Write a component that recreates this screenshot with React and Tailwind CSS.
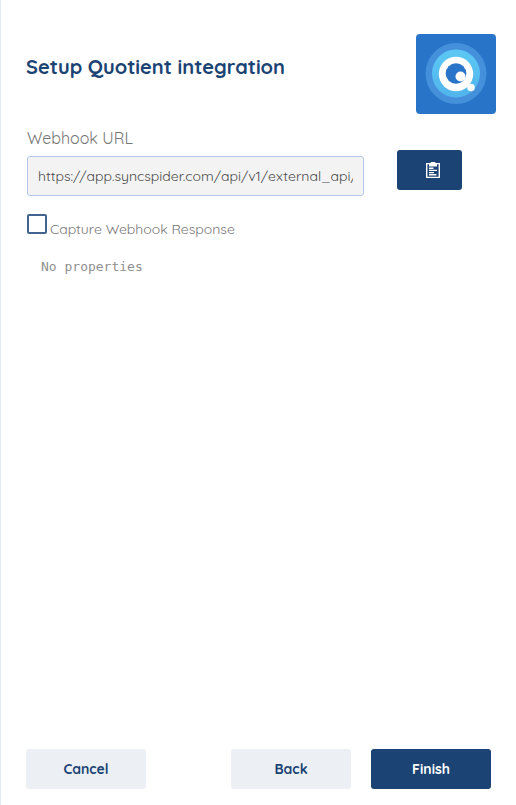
import { useState } from "react";

const WEBHOOK_URL = "https://app.syncspider.com/api/v1/external_api/";

function QuotientLogo() {
  return (
    <svg
      viewBox="0 0 80 80"
      role="img"
      aria-label="Quotient"
      className="size-20 shrink-0 rounded"
    >
      <defs>
        <linearGradient id="ring" x1="0" y1="0" x2="0" y2="1">
          <stop offset="0" stopColor="#5cc8f5" />
          <stop offset="1" stopColor="#51b4ec" />
        </linearGradient>
      </defs>
      <rect width="80" height="80" fill="#2874c9" />
      <circle cx="40" cy="39.5" r="30.5" fill="#4490db" />
      <circle cx="40" cy="39.5" r="24" fill="url(#ring)" />
      <circle cx="40" cy="40" r="17.2" fill="#fdfefd" />
      <circle cx="40" cy="39.5" r="10.3" fill="#2874c9" />
      <circle cx="44.5" cy="42.5" r="5" fill="#fdfefd" />
      <circle cx="55" cy="53.5" r="3.8" fill="#fdfefd" />
    </svg>
  );
}

function ClipboardIcon() {
  return (
    <svg viewBox="0 0 14 16" className="h-4 w-3.5" aria-hidden="true">
      <path
        fill="#fff"
        fillRule="evenodd"
        d="M0 1h4.5a2.5 1.5 0 0 1 5 0H14v15H0zM1.4 2.3v12.4h11.2V2.3H11v2.2H3V2.3z"
      />
      <path
        stroke="#fff"
        strokeWidth="1.4"
        d="M3 6.2h4.5M3 8.4h8M3 10.6h5M3 12.8h7.5"
      />
    </svg>
  );
}

function FooterButton({ primary, onClick, children }) {
  return (
    <button
      type="button"
      onClick={onClick}
      className={
        primary
          ? "h-10 w-30 rounded-[3px] bg-[#1b4373] text-sm font-bold text-white"
          : "h-10 w-30 rounded-[3px] bg-[#ecf0f5] text-sm font-bold text-[#1b4373]"
      }
    >
      {children}
    </button>
  );
}

export default function App() {
  const [capture, setCapture] = useState(false);

  function copyUrl() {
    navigator.clipboard?.writeText(WEBHOOK_URL);
  }

  return (
    <div className="flex min-h-screen flex-col border-l border-[#e6eaf3] bg-white pl-[25px] font-['Quicksand','Inter',sans-serif] text-[#777]">
      <header className="flex items-start justify-between pt-[34px] pr-5">
        <h1 className="pt-[19px] text-xl leading-7 font-bold text-[#1b4373]">
          Setup Quotient integration
        </h1>
        <QuotientLogo />
      </header>

      <main className="flex-1 pt-3 pr-[54px] pl-px">
        <div className="flex items-start gap-[33px]">
          <div className="min-w-0 flex-1">
            <label htmlFor="webhook-url" className="block pb-1.5 text-base leading-6 font-normal">
              Webhook URL
            </label>
            <input
              id="webhook-url"
              type="text"
              readOnly
              value={WEBHOOK_URL}
              className="block h-10 w-full rounded-[3px] border border-[#b5c7e9] bg-[#f3f3f3] px-2.5 text-sm text-[#4a4a4a]"
            />
          </div>
          <button
            type="button"
            aria-label="Copy webhook URL"
            onClick={copyUrl}
            className="mt-6 flex h-10 w-[65px] items-center justify-center rounded-[3px] bg-[#1b4373] pl-1.5"
          >
            <ClipboardIcon />
          </button>
        </div>

        <div className="flex items-start gap-[3px] pt-[18px]">
          <input
            id="capture"
            type="checkbox"
            checked={capture}
            onChange={(e) => setCapture(e.target.checked)}
            className="size-5 appearance-none rounded-xs border-2 border-[#41658f] bg-white checked:bg-[#41658f]"
          />
          <label htmlFor="capture" className="pt-[3px] text-sm leading-6 font-normal">
            Capture Webhook Response
          </label>
        </div>

        <p className="pt-4 pl-3.5 font-['DejaVu_Sans_Mono',monospace] text-[13px] leading-5 text-[#909090]">
          No properties
        </p>
      </main>

      <footer className="flex items-center justify-between pr-[25px] pb-4">
        <FooterButton>Cancel</FooterButton>
        <div className="flex gap-5">
          <FooterButton>Back</FooterButton>
          <FooterButton primary>Finish</FooterButton>
        </div>
      </footer>
    </div>
  );
}
